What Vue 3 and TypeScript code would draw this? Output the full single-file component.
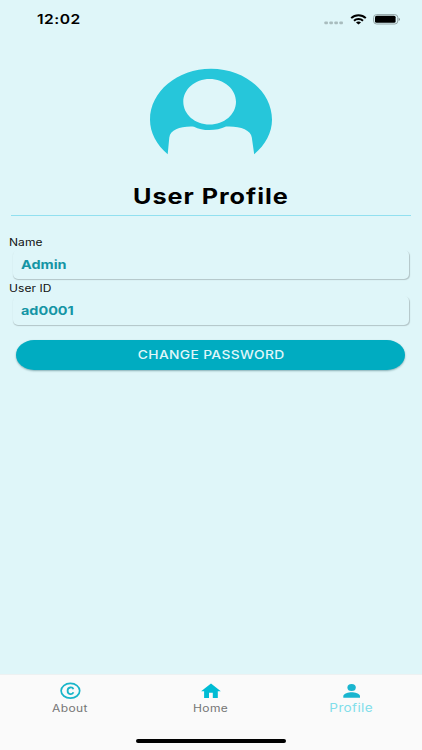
<script setup lang="ts">
interface Field { label: string; value: string; key: string }
const fields: Field[] = [
  { label: 'Name', value: 'Admin', key: 'name' },
  { label: 'User ID', value: 'ad0001', key: 'id' },
]
</script>

<template>
  <div class="screen">
    <header class="status">
      <time class="clock"><span class="wide">12:02</span></time>
      <div class="indicators">
        <svg class="dots" width="20" height="4" viewBox="0 0 20 4" fill="#a9bcbe">
          <rect x="0.4" y="0.4" width="3.5" height="2.8" rx="0.8" />
          <rect x="5.4" y="0.4" width="3.5" height="2.8" rx="0.8" />
          <rect x="10.4" y="0.4" width="3.5" height="2.8" rx="0.8" />
          <rect x="15.4" y="0.4" width="3.5" height="2.8" rx="0.8" />
        </svg>
        <svg class="wifi" width="17" height="11" viewBox="0 0 17 11" fill="none" stroke="#000" stroke-width="2">
          <path d="M1.2 4.1C5.2.2 11.8.2 15.8 4.1" />
          <path d="M4 6.7C6.5 4.4 10.5 4.4 13 6.7" />
          <path d="M8.5 10.4 6 8.5C7.2 7.3 9.8 7.3 11 8.5Z" fill="#000" stroke="none" />
        </svg>
        <svg class="battery" width="28" height="11" viewBox="0 0 28 11">
          <rect x="0.6" y="0.6" width="24.2" height="9.4" rx="3" fill="none" stroke="#93a4a6" />
          <rect x="2" y="1.8" width="20.6" height="7" rx="1.5" />
          <path d="M25.7 3.7Q27 4.2 27 5.3T25.700 6.900Z" fill="#7f9193" />
        </svg>
      </div>
    </header>

    <main>
      <svg class="avatar" width="122" height="87" viewBox="150 68 122 87">
        <path fill="#26c6da" fill-rule="evenodd" d="M167.7 154.3C156.5 144.8 150 132.6 150 119.8C150 91.5 177.3 68.7 211 68.7S272 91.5 272 119.8C272 132.6 265.5 144.8 254.2 154.3L251.8 137.5C251 129.5 239 125.7 226 126.5C216.5 131.2 202.5 131.2 194 126.7C181 126 170.5 129.5 169.3 137.5ZM209.6 79C195 79 183.3 89.2 183.3 101.8S195 124.6 209.6 124.6S236 114.4 236 101.8S224.2 79 209.6 79Z" />
      </svg>
      <h1><span class="wide">User Profile</span></h1>
      <div class="divider"></div>
      <dl>
        <template v-for="field in fields" :key="field.key">
          <dt><span class="wide">{{ field.label }}</span></dt>
          <dd><span class="wide">{{ field.value }}</span></dd>
        </template>
      </dl>
      <button type="button"><span class="wide">CHANGE PASSWORD</span></button>
    </main>

    <footer>
      <nav>
        <a class="tab">
          <svg width="22" height="18" viewBox="0 0 22 18" fill="none" stroke="#19b5c9">
            <ellipse cx="11.4" cy="8.8" rx="9.3" ry="7.4" stroke-width="1.7" />
            <path d="M14.4 7.2C13.7 4.8 8.6 4.500 8.600 8.800S13.700 12.800 14.400 10.300" stroke-width="1.800" />
          </svg>
          <span class="wide">About</span>
        </a>
        <a class="tab">
          <svg width="22" height="18" viewBox="0 0 22 18" fill="#00bcd4">
            <path d="M11 1.4 20.8 9.3H17.8V16H12.8V10.7H9V16H4.1V9.3H1.1Z" />
          </svg>
          <span class="wide">Home</span>
        </a>
        <a class="tab active">
          <svg width="22" height="18" viewBox="0 0 22 18" fill="#19b5cf">
            <ellipse cx="10.6" cy="5.5" rx="4.2" ry="3.5" />
            <path d="M2.3 15.8V13.9C2.3 11.7 7.6 10.2 10.6 10.2S19 11.7 19 13.9V15.8Z" />
          </svg>
          <span class="wide">Profile</span>
        </a>
      </nav>
      <div class="home-bar"></div>
    </footer>
  </div>
</template>

<style>
body { background: #dff6f9; }
</style>

<style scoped>
.screen {
  box-sizing: border-box;
  width: 422px;
  height: 750px;
  display: flex;
  flex-direction: column;
  overflow: hidden;
  background: #dff6f9;
  color: #000;
  font-family: Inter, "Liberation Sans", sans-serif;
}
.wide {
  display: inline-block;
  white-space: nowrap;
  transform: scaleX(1.2);
}
.status {
  height: 38px;
  box-sizing: border-box;
  padding: 0 21px 0 37px;
  display: flex;
  justify-content: space-between;
  align-items: center;
}
.clock { font-size: 13px; font-weight: 600; line-height: 18px; letter-spacing: .4px; }
.clock .wide { transform-origin: left; }
.indicators { display: flex; align-items: center; gap: 6px; }
.dots { margin-top: 7px; }
main { flex: 1; display: flex; flex-direction: column; padding: 0 11px; }
.avatar { align-self: center; margin-top: 30px; flex: none; }
h1 {
  margin: 27px 0 0;
  height: 30px;
  line-height: 30px;
  font-size: 21px;
  font-weight: 700;
  letter-spacing: .8px;
  text-align: center;
}
.divider { width: 400px; height: 1px; margin-top: 3px; background: #91e0f0; flex: none; }
dl { margin: 19px 0 0; }
dt { height: 14px; line-height: 14px; margin-left: -2px; font-size: 10px; letter-spacing: .05px; color: #111; }
dt .wide, dd .wide { transform-origin: left; }
dd {
  box-sizing: border-box;
  height: 29px;
  margin: 1px 2px 2px;
  padding-left: 8.2px;
  line-height: 29px;
  border-radius: 5px;
  background: #dff6f9;
  box-shadow: 0.5px 1px 1px rgba(0, 0, 0, .2);
  color: #1595a5;
  font-size: 12px;
  font-weight: 700;
}
button {
  width: 389px;
  height: 30px;
  margin: 13px 0 0 5.4px;
  padding: 0;
  border: 0;
  border-radius: 18px / 15px;
  background: #00acc1;
  color: #e0f7fa;
  box-shadow: 0 1px 2px rgba(0, 70, 80, .4);
  font: 500 11.5px/30px Inter, sans-serif;
  letter-spacing: .3px;
}
footer { box-sizing: border-box; height: 76px; background: #fafafa; border-top: 1px solid #edf1f2; flex: none; }
nav { display: grid; grid-template-columns: repeat(3, 1fr); height: 61px; padding-top: 7px; box-sizing: border-box; }
.tab { display: flex; flex-direction: column; align-items: center; color: #757575; font-size: 10px; line-height: 14px; letter-spacing: .3px; }
.tab svg { flex: none; margin-bottom: 1px; }
.tab.active { color: #80deea; font-size: 11.3px; }
.home-bar { width: 150px; height: 4px; margin: 3px auto 0; border-radius: 3px; background: #000; }
</style>
